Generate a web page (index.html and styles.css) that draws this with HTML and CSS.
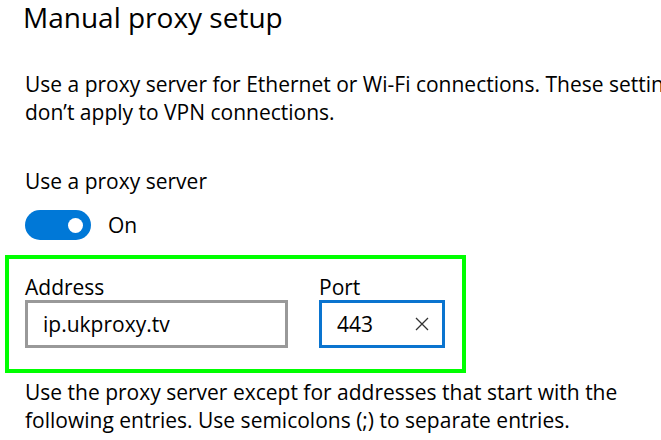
FILE: index.html
```html
<!DOCTYPE html>
<html lang="en">
<head>
<meta charset="utf-8">
<title>Manual proxy setup</title>
<link rel="stylesheet" href="styles.css">
</head>
<body>
<main class="page">
  <h1 class="title">Manual proxy setup</h1>
  <p class="text intro">Use a proxy server for Ethernet or Wi-Fi connections. These settings don’t apply to VPN connections.</p>
  <div class="text label-use">Use a proxy server</div>
  <div class="toggle-row">
    <span class="toggle"><span class="knob"></span></span>
    <span class="text">On</span>
  </div>
  <div class="highlight">
    <div class="field field-address">
      <div class="text field-label">Address</div>
      <div class="input input-gray"><span class="text">ip.ukproxy.tv</span></div>
    </div>
    <div class="field field-port">
      <div class="text field-label">Port</div>
      <div class="input input-focus">
        <span class="text">443</span>
        <svg class="clear" width="14" height="14" viewBox="0 0 14 14"><path d="M1 1 L13 13 M13 1 L1 13" stroke="#333" stroke-width="1.3" fill="none"/></svg>
      </div>
    </div>
  </div>
  <p class="text outro">Use the proxy server except for addresses that start with the following entries. Use semicolons (;) to separate entries.</p>
</main>
</body>
</html>
```
FILE: styles.css
```css
html, body {
  margin: 0;
  padding: 0;
  background: #fff;
  overflow: hidden;
}
body {
  width: 661px;
  height: 440px;
  font-family: "Open Sans", "Noto Sans", sans-serif;
  color: #000;
}
.page {
  padding-left: 25px;
}
.title {
  display: inline-block;
  margin: 0 0 0 -2px;
  padding-top: 2px;
  font-size: 28px;
  font-weight: 400;
  line-height: 30px;
  vertical-align: top;
}
.text {
  font-size: 21px;
  line-height: 28px;
}
.intro {
  margin: 38px 0 0 0;
  width: 690px;
}
.label-use {
  margin-top: 41px;
}
.toggle-row {
  margin-top: 15px;
  display: flex;
  align-items: center;
  gap: 17px;
  height: 30px;
}
.toggle {
  width: 66px;
  height: 30px;
  border-radius: 15px;
  background: #0078d7;
  display: flex;
  align-items: center;
  justify-content: flex-end;
  padding-right: 8px;
  box-sizing: border-box;
}
.knob {
  width: 15px;
  height: 15px;
  border-radius: 50%;
  background: #fff;
}
.highlight {
  margin-left: -20px;
  margin-top: 15px;
  width: 461px;
  height: 118px;
  box-sizing: border-box;
  border: 4px solid #0f0;
  padding: 15px 0 0 16px;
  display: flex;
  gap: 31px;
}
.field-label {
  line-height: 26px;
}
.input {
  height: 48px;
  box-sizing: border-box;
  border: 3px solid #999;
  padding: 0 15px;
  display: flex;
  align-items: center;
}
.input .text {
  line-height: 42px;
}
.field-address .input {
  width: 263px;
}
.field-port .input {
  width: 126px;
  justify-content: space-between;
  padding-right: 13px;
}
.input-focus {
  border-color: #0a74cf;
}
.clear {
  display: block;
}
.outro {
  margin: 5px 0 0 0;
  width: 630px;
}
```
